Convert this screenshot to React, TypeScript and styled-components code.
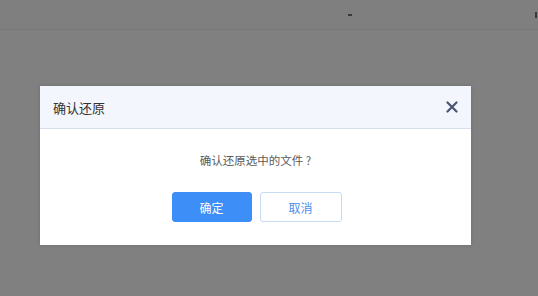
import React from "react";
import styled, { createGlobalStyle } from "styled-components";

const GlobalStyle = createGlobalStyle`
  html, body {
    margin: 0;
    padding: 0;
    background: #808080;
    font-family: "Noto Sans CJK SC", "Noto Sans", sans-serif;
  }
`;

export default function App() {
  return (
    <>
      <GlobalStyle />
      <Page>
        <TopBar>
          <Dash />
          <EdgeMark />
        </TopBar>
        <Dialog>
          <Header>
            <Title>确认还原</Title>
            <CloseButton aria-label="关闭">
              <svg width="12" height="12" viewBox="0 0 12 12">
                <path d="M1.5 1.5 L10.5 10.5 M10.5 1.5 L1.5 10.5" stroke="#4a5470" strokeWidth="2.2" strokeLinecap="round" />
              </svg>
            </CloseButton>
          </Header>
          <Body>
            <Message>确认还原选中的文件 ?</Message>
            <ButtonRow>
              <Button $primary>确定</Button>
              <Button>取消</Button>
            </ButtonRow>
          </Body>
        </Dialog>
      </Page>
    </>
  );
}

const Page = styled.div`
  width: 538px;
  height: 296px;
  overflow: hidden;
  background: #808080;
`;

const TopBar = styled.div`
  height: 30px;
  border-bottom: 1px solid #787878;
  background: #7f7f7f;
  display: flex;
  align-items: center;
  justify-content: flex-end;
  padding-right: 1px;
  box-sizing: border-box;
`;

const Dash = styled.span`
  width: 4px;
  height: 2px;
  background: #3a3a3a;
  margin-right: 183px;
`;

const EdgeMark = styled.span`
  width: 2px;
  height: 6px;
  background: #3a3a3a;
`;

const Dialog = styled.div`
  width: 431px;
  margin: 56px 0 0 40px;
  background: #ffffff;
  box-shadow: 0 0 4px rgba(0, 0, 0, 0.15);
`;

const Header = styled.div`
  height: 43px;
  box-sizing: border-box;
  background: #f3f6fc;
  border-bottom: 1px solid #d6dfec;
  display: flex;
  align-items: center;
  justify-content: space-between;
  padding: 0 13px 0 13px;
`;

const Title = styled.span`
  font-size: 13px;
  color: #333333;
`;

const CloseButton = styled.button`
  border: none;
  background: none;
  padding: 0;
  width: 12px;
  height: 12px;
  display: flex;
  cursor: pointer;
`;

const Body = styled.div`
  padding: 23px 0 23px;
  display: flex;
  flex-direction: column;
  align-items: center;
`;

const Message = styled.p`
  margin: 0;
  font-size: 11.5px;
  line-height: 16px;
  color: #5a5a5a;
`;

const ButtonRow = styled.div`
  display: flex;
  gap: 8px;
  margin-top: 24px;
  padding-left: 2px;
`;

const Button = styled.button<{ $primary?: boolean }>`
  width: ${(p) => (p.$primary ? "80px" : "82px")};
  height: 30px;
  border-radius: 3px;
  font-family: inherit;
  font-size: 12px;
  cursor: pointer;
  border: 1px solid ${(p) => (p.$primary ? "#3d8ef7" : "#c8daf3")};
  background: ${(p) => (p.$primary ? "#3d8ef7" : "#ffffff")};
  color: ${(p) => (p.$primary ? "#ffffff" : "#4a8ef0")};
`;
